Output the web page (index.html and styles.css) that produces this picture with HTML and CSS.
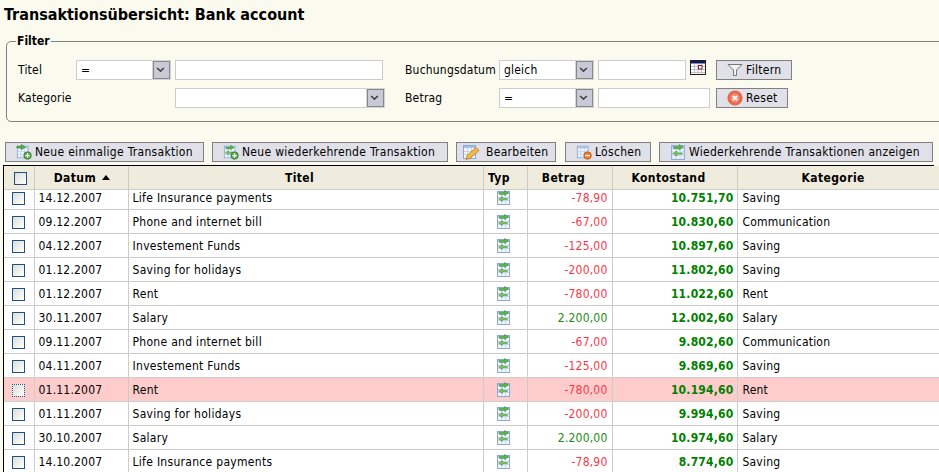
FILE: index.html
```html
<!DOCTYPE html>
<html>

<head>
    <title>Transaktionsübersicht</title>
    <link rel="stylesheet" href="styles.css">
</head>

<body>
    <svg class="defs" width="0" height="0">
        <defs>
            <g id="sheet">
                <rect x="1.5" y="2.5" width="12" height="13" fill="#f2f6fc" stroke="#8aa8d8"/>
                <rect x="2" y="3" width="11" height="2" fill="#a9c2ea"/>
                <path d="M2 8.500h11M2 11.500h11M5.500 5v10M9.500 5v10" stroke="#c4d4ec" fill="none"/>
            </g>
            <g id="swap">
                <use href="#sheet"/>
                <path d="M3.500 3.500h5V1.500l4 2.500-4 2.500V5.500h-5z" fill="#5cb548" stroke="#3b8f32" stroke-width=".5"/>
                <path d="M11.500 9.500h-5V7.500l-4 2.500 4 2.500v-2h5z" fill="#7cc860" stroke="#3b8f32" stroke-width=".5"/>
            </g>
            <g id="plus">
                <circle cx="13" cy="13" r="4.200" fill="#5aa84a" stroke="#3c7f36"/>
                <path d="M13 10.500v5M10.500 13h5" stroke="#fff" stroke-width="1.400"/>
            </g>
        </defs>
    </svg>

    <h1 class="page-title">Transaktionsübersicht: Bank account</h1>

    <fieldset class="filter">
        <legend>Filter</legend>
        <div class="filter-grid">
            <span class="lbl">Titel</span>
            <span class="combo combo-op"><span class="combo-val">=</span><span class="arrow"></span></span>
            <input class="txt txt-title" type="text">
            <span class="lbl">Buchungsdatum</span>
            <span class="combo combo-cmp"><span class="combo-val">gleich</span><span class="arrow"></span></span>
            <span class="date-cell">
                <input class="txt txt-date" type="text">
                <svg class="cal" width="16" height="15" viewBox="0 0 16 15">
                    <rect x=".5" y=".5" width="15" height="14" fill="#fff" stroke="#222"/>
                    <rect x="1" y="1" width="14" height="2.500" fill="#0a1a66"/>
                    <path d="M1 6.500h14M1 9.500h14M1 12.500h14M4.500 4v10M8 4v10M11.500 4v10" stroke="#c4bcc4" fill="none"/>
                    <rect x="8.500" y="5.500" width="3.500" height="3.500" fill="#fff" stroke="#802020"/>
                </svg>
            </span>
            <button class="btn btn-filter">
                <svg width="16" height="14" viewBox="0 0 16 14">
                    <path d="M1 1.500h14L9.500 7v5.500h-3V7z" fill="#f4f4f4" stroke="#777"/>
                </svg>
                Filtern
            </button>

            <span class="lbl">Kategorie</span>
            <span></span>
            <span class="combo combo-cat"><span class="combo-val"></span><span class="arrow"></span></span>
            <span class="lbl">Betrag</span>
            <span class="combo combo-cmp"><span class="combo-val">=</span><span class="arrow"></span></span>
            <input class="txt txt-amount" type="text">
            <button class="btn btn-reset">
                <svg width="16" height="16" viewBox="0 0 16 16">
                    <circle cx="8" cy="8" r="6.800" fill="#ee6a50" stroke="#e2684c" stroke-width="1.600"/>
                    <circle cx="8" cy="8" r="4.500" fill="#f58a72"/>
                    <path d="M5.800 5.800l4.400 4.400M10.200 5.800l-4.400 4.400" stroke="#fff" stroke-width="1.700"/>
                </svg>
                Reset
            </button>
        </div>
    </fieldset>

    <div class="toolbar">
        <button class="btn tool-new">
            <svg width="16" height="18" viewBox="0 0 18 18">
                <use href="#sheet"/>
                <path d="M1 2.500h5V.5l4.500 3L6 6.500V4.500H1z" fill="#58b040" stroke="#2c7d26" stroke-width=".6"/>
                <use href="#plus"/>
            </svg>
            Neue einmalige Transaktion
        </button>
        <button class="btn tool-recurring">
            <svg width="16" height="18" viewBox="0 0 18 18"><use href="#swap"/><use href="#plus"/></svg>
            Neue wiederkehrende Transaktion
        </button>
        <button class="btn tool-edit">
            <svg width="21" height="18" viewBox="0 0 21 18">
                <use href="#sheet"/>
                <path d="M4 16.500l1-4 9-8 3 3-9 8z" fill="#f2b948" stroke="#b57a20" stroke-width=".8"/>
            </svg>
            Bearbeiten
        </button>
        <button class="btn tool-delete">
            <svg width="16" height="18" viewBox="0 0 18 18">
                <use href="#sheet"/>
                <circle cx="13" cy="13" r="4.200" fill="#ec7b2c" stroke="#bf5a18"/>
                <path d="M10.500 13h5" stroke="#fff" stroke-width="1.500"/>
            </svg>
            Löschen
        </button>
        <button class="btn tool-show">
            <svg width="16" height="18" viewBox="0 0 15 17"><use href="#swap"/></svg>
            Wiederkehrende Transaktionen anzeigen
        </button>
    </div>

    <div class="grid-wrap">
        <div class="grid-top"></div>
        <table class="grid">
            <colgroup>
                <col class="c-check"><col class="c-date"><col class="c-title"><col class="c-type">
                <col class="c-amount"><col class="c-balance"><col class="c-cat">
            </colgroup>
            <thead>
                <tr>
                    <th class="th-check"><span class="check"></span></th>
                    <th class="th-date">Datum <span class="sort"></span></th>
                    <th class="th-off">Titel</th>
                    <th class="th-off">Typ</th>
                    <th class="th-off">Betrag</th>
                    <th class="th-off">Kontostand</th>
                    <th>Kategorie</th>
                </tr>
            </thead>
        </table>
        <div class="grid-body">
            <table class="grid grid-rows">
                <colgroup>
                    <col class="c-check"><col class="c-date"><col class="c-title"><col class="c-type">
                    <col class="c-amount"><col class="c-balance"><col class="c-cat">
                </colgroup>
                <tbody id="rows"></tbody>
            </table>
        </div>
    </div>

    <script>
        "use strict"

        const data = [
            ['14.12.2007', 'Life Insurance payments', '-78,90', '10.751,70', 'Saving'],
            ['09.12.2007', 'Phone and internet bill', '-67,00', '10.830,60', 'Communication'],
            ['04.12.2007', 'Investement Funds', '-125,00', '10.897,60', 'Saving'],
            ['01.12.2007', 'Saving for holidays', '-200,00', '11.802,60', 'Saving'],
            ['01.12.2007', 'Rent', '-780,00', '11.022,60', 'Rent'],
            ['30.11.2007', 'Salary', '2.200,00', '12.002,60', 'Salary'],
            ['09.11.2007', 'Phone and internet bill', '-67,00', '9.802,60', 'Communication'],
            ['04.11.2007', 'Investement Funds', '-125,00', '9.869,60', 'Saving'],
            ['01.11.2007', 'Rent', '-780,00', '10.194,60', 'Rent'],
            ['01.11.2007', 'Saving for holidays', '-200,00', '9.994,60', 'Saving'],
            ['30.10.2007', 'Salary', '2.200,00', '10.974,60', 'Salary'],
            ['14.10.2007', 'Life Insurance payments', '-78,90', '8.774,60', 'Saving']
        ];

        const icon = '<svg width="15" height="17" viewBox="0 0 15 17"><use href="#swap"/></svg>';

        document.getElementById('rows').innerHTML = data.map((d, i) => {
            const cls = i === 8 ? ' class="hilite"' : '';
            const amountCls = d[2][0] === '-' ? 'neg' : 'pos';
            return `<tr${cls}>
                <td class="mid"><span class="check${i === 8 ? ' check-focus' : ''}"></span></td>
                <td>${d[0]}</td>
                <td class="title-cell">${d[1]}</td>
                <td class="mid type-cell">${icon}</td>
                <td class="num ${amountCls}">${d[2]}</td>
                <td class="num bal">${d[3]}</td>
                <td class="cat-cell">${d[4]}</td>
            </tr>`;
        }).join('');
    </script>
</body>

</html>
```

FILE: styles.css
```css
html, body {
    margin: 0;
    height: 472px;
    overflow: hidden;
}

body {
    font-family: 'DejaVu Sans', sans-serif;
    font-stretch: condensed;
    font-size: 12px;
    letter-spacing: .2px;
    color: #000;
    background: #fafaee;
}

.defs {
    display: block;
    height: 0;
}

.page-title {
    margin: 0;
    padding: 5px 0 0 4px;
    height: 24px;
    box-sizing: content-box;
    font-size: 16px;
    line-height: 20px;
    font-weight: bold;
    letter-spacing: 0;
}

.filter {
    margin: 5px -20px 0 6px;
    padding: 0;
    height: 86px;
    border: 1px solid #808080;
    border-radius: 5px;
}

.filter legend {
    margin-left: 9px;
    padding: 0 1px;
    font-weight: bold;
    line-height: 14px;
    letter-spacing: 0;
}

.filter-grid {
    display: grid;
    grid-template-columns: 58px 99px 230px 94px 99px 118px auto;
    grid-auto-rows: 20px;
    row-gap: 8px;
    align-items: center;
    padding: 12px 0 0 11px;
}

.lbl {
    line-height: 20px;
}

.combo {
    display: flex;
    box-sizing: border-box;
    height: 20px;
    background: #fff;
    border: 1px solid #ccc;
}

.combo-op {
    width: 95px;
}

.combo-cmp {
    width: 95px;
}

.combo-cat {
    width: 210px;
}

.combo-val {
    flex: 1;
    padding-left: 4px;
    line-height: 18px;
}

.arrow {
    position: relative;
    width: 15px;
    background: #c8cad8;
    border: 1px solid #888;
    outline: 1px solid #d4d4d4;
}

.arrow::after {
    content: "";
    position: absolute;
    left: 3px;
    top: 3px;
    width: 5px;
    height: 5px;
    border: solid #404040;
    border-width: 0 2px 2px 0;
    transform: scale(.8, .7) rotate(45deg);
}

.txt {
    box-sizing: border-box;
    height: 20px;
    margin: 0;
    padding: 0 3px;
    background: #fff;
    border: 1px solid #ccc;
    border-radius: 0;
    outline: none;
}

.txt-title {
    width: 208px;
}

.txt-date {
    width: 88px;
}

.txt-amount {
    width: 112px;
}

.date-cell {
    display: flex;
    align-items: flex-start;
    gap: 4px;
}

.cal {
    display: block;
}

.btn {
    display: inline-flex;
    align-items: center;
    justify-content: flex-start;
    gap: 3px;
    box-sizing: border-box;
    height: 20px;
    margin: 0;
    padding: 0 0 0 10px;
    font: inherit;
    font-stretch: condensed;
    letter-spacing: .3px;
    white-space: nowrap;
    color: #000;
    background: #e0e0e8;
    border: 1px solid #808080;
    border-radius: 0;
}

.btn-filter {
    width: 76px;
}

.btn-reset {
    width: 72px;
}

.toolbar {
    display: flex;
    margin: 20px 0 0 5px;
    height: 20px;
}

.tool-new {
    width: 199px;
    margin-right: 8px;
}

.tool-recurring {
    width: 236px;
    margin-right: 8px;
}

.tool-edit {
    width: 100px;
    margin-right: 9px;
    padding-left: 5px;
}

.tool-delete {
    width: 86px;
    margin-right: 8px;
}

.tool-show {
    width: 274px;
}

.grid-wrap {
    margin: 3px 0 0 3px;
    width: 990px;
    border-left: 1px solid #000;
}

.grid-top {
    width: 930px;
    height: 1px;
    background: #000;
}

.grid {
    table-layout: fixed;
    width: 990px;
    border-collapse: collapse;
    background: #fff;
}

.c-check { width: 30px; }
.c-date { width: 94px; }
.c-title { width: 355px; }
.c-type { width: 44px; }
.c-amount { width: 85px; }
.c-balance { width: 125px; }
.c-cat { width: 257px; }

.grid th {
    height: 23px;
    padding: 0;
    font-weight: bold;
    letter-spacing: .4px;
    background: #efecdd;
    border-right: 1px solid #ccc;
    border-bottom: 1px solid #ccc;
    text-align: center;
}

.grid .th-check {
    padding-left: 4px;
}

.grid .th-date {
    padding-left: 2px;
}

.grid .th-off {
    padding-right: 12px;
}

.grid th:last-child {
    text-align: left;
    padding-left: 64px;
}

.grid-body {
    height: 283px;
    overflow: hidden;
}

.grid-rows {
    margin-top: -4px;
}

.grid-rows td {
    height: 23px;
    padding: 0 0 0 4px;
    background: #fff;
    border-right: 1px solid #ccc;
    border-bottom: 1px solid #ccc;
    white-space: nowrap;
}

.grid-rows .title-cell {
    letter-spacing: .3px;
}

.grid-rows .cat-cell {
    padding-left: 5px;
}

.grid-rows .mid {
    padding: 0;
    text-align: center;
}

.grid-rows .type-cell {
    padding-right: 4px;
}

.mid svg {
    display: block;
    margin: 0 auto;
}

.grid-rows .num {
    padding: 0 4px 0 0;
    text-align: right;
}

.grid-rows .bal {
    padding-right: 3px;
}

.neg {
    color: #f8394a;
}

.pos {
    color: #1e8c14;
}

.bal {
    color: #007f00;
    font-weight: bold;
}

.grid-rows .hilite td {
    background: #ffcccc;
}

.check {
    display: inline-block;
    box-sizing: border-box;
    width: 13px;
    height: 13px;
    vertical-align: middle;
    background: linear-gradient(135deg, #dcdcd8, #fff);
    border: 1px solid #1c5180;
}

.check-focus {
    border: 1px dotted #1c5180;
}

.sort {
    display: inline-block;
    margin-left: 2px;
    vertical-align: 2px;
    border: solid transparent;
    border-width: 0 4px 5px;
    border-bottom-color: #000;
}
```
